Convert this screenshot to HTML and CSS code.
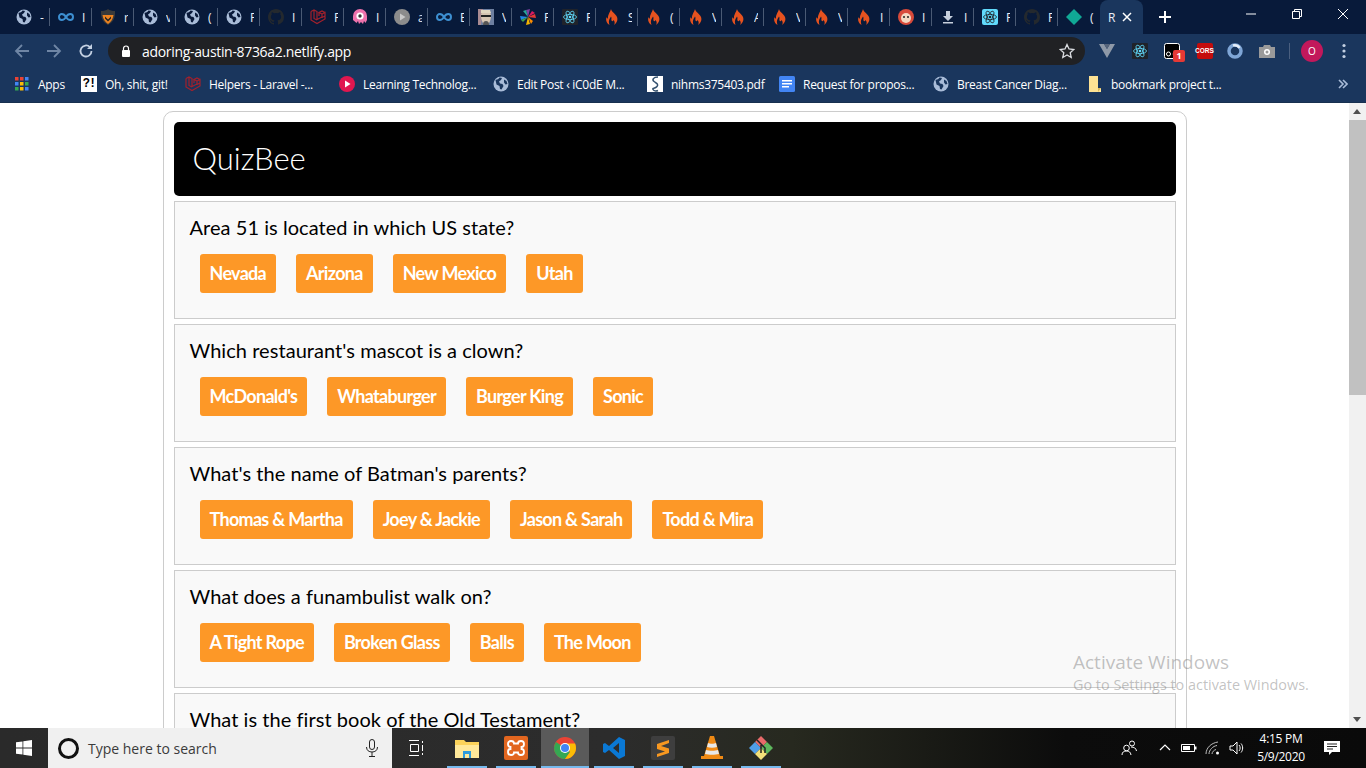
FILE: index.html
```html
<!DOCTYPE html>
<html lang="en">
<head>
<meta charset="utf-8">
<title>QuizBee</title>
<link rel="stylesheet" href="styles.css">
</head>
<body>
<svg class="defs" width="0" height="0">
<defs>
<symbol id="globe" viewBox="0 0 16 16"><circle cx="8" cy="8" r="7.500" fill="#a9bcd8"/><path d="M2.500 4c2-.5 3-1 4-2.500l2.500.5-1 2-2 1.500 1 2 2.500.5 1 2-2 3.500-1.500-.5-.5-3-3-1.500zM11 3.500l2.500 1.500 1 3-2 .5-1.500-2z" fill="#0a1a3a"/></symbol>
<symbol id="globe2" viewBox="0 0 16 16"><circle cx="8" cy="8" r="7.500" fill="#a9bcd8"/><path d="M2.500 4c2-.5 3-1 4-2.500l2.500.5-1 2-2 1.500 1 2 2.500.5 1 2-2 3.500-1.500-.5-.5-3-3-1.500zM11 3.500l2.500 1.500 1 3-2 .5-1.500-2z" fill="#1a365d"/></symbol>
<symbol id="inf" viewBox="0 0 16 16"><path d="M8 8C6.500 5.500 5 5 3.800 5 2.200 5 1 6.300 1 8s1.200 3 2.800 3C5 11 6.500 10.500 8 8c1.500-2.500 3-3 4.200-3C13.800 5 15 6.300 15 8s-1.200 3-2.800 3C11 11 9.500 10.500 8 8z" fill="none" stroke="#3d8fd1" stroke-width="2"/></symbol>
<symbol id="shield" viewBox="0 0 16 16"><path d="M1 2c3 0 5-.5 7-2 2 1.500 4 2 7 2 .5 6.500-1.500 11-7 14C2.500 13 .5 8.500 1 2z" fill="#3a3a3a"/><path d="M2.500 6h11c-.5 4-2.500 7-5.500 9C5 13 3 10 2.500 6z" fill="#ee8320"/><path d="M5 7.500l3 3 3-3v2l-3 3-3-3z" fill="#222"/></symbol>
<symbol id="gh" viewBox="0 0 16 16"><path fill="#24292e" d="M8 0C3.580 0 0 3.580 0 8c0 3.540 2.290 6.530 5.470 7.590.4.070.55-.17.55-.38v-1.340c-2.230.48-2.690-1.070-2.690-1.070-.36-.93-.89-1.170-.89-1.170-.73-.5.060-.49.060-.49.800.060 1.220.82 1.220.82.720 1.220 1.870.87 2.330.66.070-.52.280-.87.510-1.070-1.780-.2-3.640-.89-3.640-3.950 0-.87.31-1.590.82-2.150-.08-.2-.36-1.020.080-2.120 0 0 .67-.21 2.200.82a7.600 7.600 0 0 1 4 0c1.530-1.040 2.200-.82 2.200-.82.44 1.100.16 1.920.08 2.120.51.560.82 1.270.82 2.150 0 3.070-1.870 3.750-3.650 3.950.29.250.54.730.54 1.480v2.200c0 .21.150.46.550.38A8 8 0 0 0 16 8c0-4.420-3.580-8-8-8z"/></symbol>
<symbol id="lara" viewBox="0 0 16 16"><path d="M1 2.500l3-1.500 3 1.500v8l5-2.500V5l3-1.500V7l-3 1.500M1 2.500V11l6 3.500L15 10V7M4 1v8.500l3 1.500M12 5l-3-1.500L12 2l3 1.500M9 3.500V7" fill="none" stroke="#a3212c" stroke-width="1.200"/></symbol>
<symbol id="octo" viewBox="0 0 16 16"><path d="M1 7a7 7 0 0 1 14 0v4l-1.500 3-1.500-2-1 3-2-2-2 2-1-3-1.500 2L1 11z" fill="#ee72ac"/><circle cx="8" cy="7" r="3.600" fill="#fff"/><circle cx="8" cy="7" r="1.700" fill="#333"/></symbol>
<symbol id="playg" viewBox="0 0 16 16"><circle cx="8" cy="8" r="8" fill="#8c8c8c"/><path d="M6 4.500L11.500 8 6 11.500z" fill="#c9c9c9"/></symbol>
<symbol id="photo" viewBox="0 0 16 16"><rect width="16" height="16" fill="#6d7fa0"/><path d="M0 0h5l-2 16H0z" fill="#a98b92"/><path d="M3 7c0-4 2-6 5-6s5 2 5 6-2 9-5 9-5-5-5-9z" fill="#d6c5b2"/><path d="M3 1h9l1 3H3z" fill="#e0d6c0"/><path d="M3 6h10v2H3z" fill="#222"/><path d="M5 16c0-3 1-4 3-4s3 1 3 4z" fill="#555"/></symbol>
<symbol id="pin" viewBox="0 0 16 16"><path d="M8 8L6 1l4-1z" fill="#7b3fa0"/><path d="M8 8l7-3 1 4z" fill="#e53935"/><path d="M8 8l2 7-4 1z" fill="#f4b400"/><path d="M8 8L1 11 0 7z" fill="#1e88e5"/><path d="M8 8l4-6 3 2z" fill="#d81b60"/><path d="M8 8l-5 5-2-2z" fill="#43a047"/><path d="M8 8l5 4-2 3z" fill="#fb8c00"/><path d="M8 8L3 2l3-1z" fill="#26a69a"/></symbol>
<symbol id="react" viewBox="0 0 16 16"><rect width="16" height="16" rx="1" fill="#20232a"/><g fill="none" stroke="#61dafb" stroke-width=".8"><ellipse cx="8" cy="8" rx="6.500" ry="2.600"/><ellipse cx="8" cy="8" rx="6.500" ry="2.600" transform="rotate(60 8 8)"/><ellipse cx="8" cy="8" rx="6.500" ry="2.600" transform="rotate(120 8 8)"/></g><circle cx="8" cy="8" r="1.300" fill="#61dafb"/></symbol>
<symbol id="reactl" viewBox="0 0 16 16"><rect width="16" height="16" rx="2" fill="#61dafb"/><g fill="none" stroke="#20232a" stroke-width=".8"><ellipse cx="8" cy="8" rx="6.500" ry="2.600"/><ellipse cx="8" cy="8" rx="6.500" ry="2.600" transform="rotate(60 8 8)"/><ellipse cx="8" cy="8" rx="6.500" ry="2.600" transform="rotate(120 8 8)"/></g><circle cx="8" cy="8" r="1.300" fill="#20232a"/></symbol>
<symbol id="fire" viewBox="0 0 16 16"><path d="M7 0c.5 3 4.500 4.500 6 8 1.200 3-.5 6.500-3 8 1-1.500 1-3.500-.5-5-.5 1.500-1.500 1.500-2 .5-.5-1 .5-2.500-.5-4C6 9.500 4 11 5.500 16 2.500 14.500 1.500 11 2.500 8c.3 1 1 1.500 1.500 1.500C3.500 6 6 3.500 7 0z" fill="#e6521f"/></symbol>
<symbol id="face" viewBox="0 0 16 16"><circle cx="8" cy="8" r="8" fill="#d84a3a"/><circle cx="8" cy="9" r="5" fill="#f4d7c0"/><circle cx="6" cy="8" r="1" fill="#222"/><circle cx="10" cy="8" r="1" fill="#222"/></symbol>
<symbol id="dl" viewBox="0 0 16 16"><path d="M6 2h4v5h3l-5 5-5-5h3zM3 13h10v1.500H3z" fill="#c7d0dd"/></symbol>
<symbol id="dia" viewBox="0 0 16 16"><path d="M8 0l8 8-8 8-8-8z" fill="#10a895"/></symbol>
</defs>
</svg>

<div class="chrome">
  <div class="tabstrip">
    <div class="tab"><svg class="ic"><use href="#globe"/></svg><span class="t">-</span></div>
    <div class="tab"><svg class="ic"><use href="#inf"/></svg><span class="t">I</span></div>
    <div class="tab"><svg class="ic"><use href="#shield"/></svg><span class="t">r</span></div>
    <div class="tab"><svg class="ic"><use href="#globe"/></svg><span class="t">v</span></div>
    <div class="tab"><svg class="ic"><use href="#globe"/></svg><span class="t">(</span></div>
    <div class="tab"><svg class="ic"><use href="#globe"/></svg><span class="t">F</span></div>
    <div class="tab"><svg class="ic"><use href="#gh"/></svg><span class="t">I</span></div>
    <div class="tab"><svg class="ic"><use href="#lara"/></svg><span class="t">F</span></div>
    <div class="tab"><svg class="ic"><use href="#octo"/></svg><span class="t">I</span></div>
    <div class="tab"><svg class="ic"><use href="#playg"/></svg><span class="t">a</span></div>
    <div class="tab"><svg class="ic"><use href="#inf"/></svg><span class="t">E</span></div>
    <div class="tab"><svg class="ic"><use href="#photo"/></svg><span class="t">V</span></div>
    <div class="tab"><svg class="ic"><use href="#pin"/></svg><span class="t">F</span></div>
    <div class="tab"><svg class="ic"><use href="#react"/></svg><span class="t">F</span></div>
    <div class="tab"><svg class="ic"><use href="#fire"/></svg><span class="t">S</span></div>
    <div class="tab"><svg class="ic"><use href="#fire"/></svg><span class="t">(</span></div>
    <div class="tab"><svg class="ic"><use href="#fire"/></svg><span class="t">V</span></div>
    <div class="tab"><svg class="ic"><use href="#fire"/></svg><span class="t">A</span></div>
    <div class="tab"><svg class="ic"><use href="#fire"/></svg><span class="t">V</span></div>
    <div class="tab"><svg class="ic"><use href="#fire"/></svg><span class="t">V</span></div>
    <div class="tab"><svg class="ic"><use href="#fire"/></svg><span class="t">I</span></div>
    <div class="tab"><svg class="ic"><use href="#face"/></svg><span class="t">I</span></div>
    <div class="tab"><svg class="ic"><use href="#dl"/></svg><span class="t">I</span></div>
    <div class="tab"><svg class="ic"><use href="#reactl"/></svg><span class="t">F</span></div>
    <div class="tab"><svg class="ic"><use href="#gh"/></svg><span class="t">F</span></div>
    <div class="tab tab-last"><svg class="ic"><use href="#dia"/></svg><span class="t">(</span></div>
    <div class="tab-active"><span class="t">R</span><svg class="close" viewBox="0 0 10 10"><path d="M1 1l8 8M9 1l-8 8" stroke="#fff" stroke-width="1.500"/></svg></div>
    <svg class="newtab" viewBox="0 0 12 12"><path d="M6 0v12M0 6h12" stroke="#fff" stroke-width="2"/></svg>
    <div class="winctl">
      <svg class="wc" viewBox="0 0 46 14"><path d="M18 7h10" stroke="#fff"/></svg>
      <svg class="wc" viewBox="0 0 46 14"><path d="M18.500 4.500h7v7h-7zM20.500 4.500v-2h7v7h-2" fill="none" stroke="#fff"/></svg>
      <svg class="wc" viewBox="0 0 46 14"><path d="M18 2l10 10M28 2L18 12" stroke="#fff"/></svg>
    </div>
  </div>

  <div class="toolbar">
    <svg class="nav" viewBox="0 0 16 16"><path d="M15 8H2M8 2L2 8l6 6" fill="none" stroke="#6f86a5" stroke-width="1.800"/></svg>
    <svg class="nav" viewBox="0 0 16 16"><path d="M1 8h13M8 2l6 6-6 6" fill="none" stroke="#6f86a5" stroke-width="1.800"/></svg>
    <svg class="nav" viewBox="0 0 16 16"><path d="M13.500 8a5.500 5.500 0 1 1-1.600-3.900" fill="none" stroke="#c3d0e2" stroke-width="1.800"/><path d="M14 1v5H9z" fill="#c3d0e2"/></svg>
    <div class="omni">
      <svg class="lock" viewBox="0 0 10 12"><path d="M2.500 5V3.500a2.500 2.500 0 0 1 5 0V5" fill="none" stroke="#fff" stroke-width="1.200"/><rect y="5" width="8" height="7" rx="1" x="1" fill="#fff"/></svg>
      <span class="url">adoring-austin-8736a2.netlify.app</span>
      <svg class="star" viewBox="0 0 16 16"><path d="M8 1.500l2 4.500 4.800.5-3.600 3.200 1 4.800L8 12l-4.200 2.500 1-4.800L1.200 6.500 6 6z" fill="none" stroke="#dadce0" stroke-width="1.300"/></svg>
    </div>
    <div class="exts">
      <svg class="ext" viewBox="0 0 16 16"><path d="M0 1h5l3 5 3-5h5L8 15z" fill="#8e99a8"/><path d="M5 1h6L8 6z" fill="#56657c"/></svg>
      <svg class="ext" viewBox="0 0 16 16"><use href="#react"/></svg>
      <div class="ext-badge"><svg class="ext" viewBox="0 0 16 16"><rect x=".5" y=".5" width="15" height="15" rx="2" fill="#000" stroke="#fff"/><circle cx="4.500" cy="11" r="2" fill="none" stroke="#fff"/><circle cx="10" cy="11" r="1.500" fill="#777"/></svg><span class="badge">1</span></div>
      <div class="ext cors"><span>CORS</span></div>
      <svg class="ext ext-ring" viewBox="0 0 16 16"><circle cx="8" cy="8" r="6" fill="none" stroke="#7fa6d6" stroke-width="3.500"/><path d="M6 2.400a6 6 0 0 1 6.500 2.500" fill="none" stroke="#e6eef8" stroke-width="2.500"/></svg>
      <svg class="ext" viewBox="0 0 16 16"><path d="M0 4h4l1-2h6l1 2h4v11H0z" fill="#9a9a9a"/><circle cx="8" cy="9" r="3" fill="#fff"/><circle cx="8" cy="9" r="1.500" fill="#9a9a9a"/></svg>
      <span class="tdiv"></span>
      <span class="avatar">O</span>
      <svg class="dots" viewBox="0 0 4 16"><circle cx="2" cy="2.500" r="1.600" fill="#c3d0e2"/><circle cx="2" cy="8" r="1.600" fill="#c3d0e2"/><circle cx="2" cy="13.500" r="1.600" fill="#c3d0e2"/></svg>
    </div>
  </div>

  <div class="bookmarks">
    <div class="bm bm-apps"><svg class="ic" viewBox="0 0 14 14"><rect width="3.500" height="3.500" class="apps-r"/><rect x="5" width="3.500" height="3.500" class="apps-r"/><rect x="10" width="3.500" height="3.500" class="apps-b"/><rect y="5" width="3.500" height="3.500" class="apps-b"/><rect x="5" y="5" width="3.500" height="3.500" class="apps-y"/><rect x="10" y="5" width="3.500" height="3.500" class="apps-g"/><rect y="10" width="3.500" height="3.500" class="apps-g"/><rect x="5" y="10" width="3.500" height="3.500" class="apps-y"/><rect x="10" y="10" width="3.500" height="3.500" class="apps-b"/></svg><span>Apps</span></div>
    <div class="bm bm-git"><span class="qicon">?!</span><span>Oh, shit, git!</span></div>
    <div class="bm bm-w"><svg class="ic"><use href="#lara"/></svg><span>Helpers - Laravel -...</span></div>
    <div class="bm bm-w"><svg class="ic" viewBox="0 0 16 16"><circle cx="8" cy="8" r="8" fill="#e0174f"/><path d="M6 4.500L11.500 8 6 11.500z" fill="#fff"/></svg><span>Learning Technolog...</span></div>
    <div class="bm bm-w"><svg class="ic"><use href="#globe2"/></svg><span>Edit Post ‹ iC0dE M...</span></div>
    <div class="bm bm-pdf"><svg class="ic" viewBox="0 0 16 16"><rect width="16" height="16" fill="#fff"/><path d="M11 1C6 1 5 4 7 5.500s5 2.500 3 5-5 1-4 3 4 1.500 5 1" fill="none" stroke="#33506e" stroke-width="1.500"/></svg><span>nihms375403.pdf</span></div>
    <div class="bm bm-w"><svg class="ic" viewBox="0 0 16 16"><rect width="16" height="16" rx="1.500" fill="#4285f4"/><path d="M3 4h10v1.500H3zM3 7h10v1.500H3zM3 10h7v1.500H3z" fill="#fff"/></svg><span>Request for propos...</span></div>
    <div class="bm bm-w"><svg class="ic"><use href="#globe2"/></svg><span>Breast Cancer Diag...</span></div>
    <div class="bm bm-w"><svg class="ic" viewBox="0 0 16 16"><path d="M2 0h9v12h3v4H2z" fill="#fde293"/><path d="M11 12h3l-3 4z" fill="#d8b75c"/></svg><span>bookmark project t...</span></div>
    <svg class="more" viewBox="0 0 10 10"><path d="M1 1l4 4-4 4M5 1l4 4-4 4" fill="none" stroke="#a9bcd8" stroke-width="1.600"/></svg>
  </div>
</div>

<div class="viewport">
  <main class="page">
    <div class="card">
      <header class="brand"><h1>QuizBee</h1></header>
      <section class="q"><h2>Area 51 is located in which US state?</h2>
        <div class="opts"><button>Nevada</button><button>Arizona</button><button>New Mexico</button><button>Utah</button></div></section>
      <section class="q"><h2>Which restaurant's mascot is a clown?</h2>
        <div class="opts"><button>McDonald's</button><button>Whataburger</button><button>Burger King</button><button>Sonic</button></div></section>
      <section class="q"><h2>What's the name of Batman's parents?</h2>
        <div class="opts"><button>Thomas &amp; Martha</button><button>Joey &amp; Jackie</button><button>Jason &amp; Sarah</button><button>Todd &amp; Mira</button></div></section>
      <section class="q"><h2>What does a funambulist walk on?</h2>
        <div class="opts"><button>A Tight Rope</button><button>Broken Glass</button><button>Balls</button><button>The Moon</button></div></section>
      <section class="q"><h2>What is the first book of the Old Testament?</h2></section>
    </div>
  </main>
  <div class="scrollbar">
    <span class="arrow-up"></span>
    <div class="track"><div class="thumb"></div></div>
    <span class="arrow-down"></span>
  </div>
  <div class="watermark"><div class="wm1">Activate Windows</div><div class="wm2">Go to Settings to activate Windows.</div></div>
</div>

<footer class="taskbar">
  <div class="start"><svg class="win" viewBox="0 0 16 16"><path d="M0 2.300l6.500-.9v6.200H0zM7.300 1.300L16 0v7.600H7.300zM0 8.400h6.500v6.200L0 13.700zM7.300 8.400H16V16l-8.700-1.300z" fill="#fff"/></svg></div>
  <div class="search">
    <span class="cortana"></span>
    <span class="stext">Type here to search</span>
    <svg class="mic" viewBox="0 0 12 18"><rect x="3.500" y=".5" width="5" height="10" rx="2.500" fill="none" stroke="#222"/><path d="M.5 8c0 3.500 2.500 5 5.500 5s5.500-1.500 5.500-5M6 13v4M3 17.500h6" fill="none" stroke="#222"/></svg>
  </div>
  <div class="tb-tv"><svg class="tv" viewBox="0 0 16 16"><path d="M1 .5h10M1 15.500h10M2.500 4.500h8v7h-8z" fill="none" stroke="#fff"/><path d="M14 1h1v2h-1zM14 5h1v6h-1zM14 13h1v2h-1z" fill="#fff"/></svg></div>
  <div class="tb-btn"><svg class="app" viewBox="0 0 24 24"><path d="M0 4h9l2 2h13v16H0z" fill="#fbd25a"/><path d="M0 9h24v13H0z" fill="#ffe89a"/><path d="M8 15h8v7h-2v-4h-4v4H8z" fill="#2f9bdc"/></svg></div>
  <div class="tb-btn"><svg class="app" viewBox="0 0 24 24"><rect width="24" height="24" rx="2" fill="#e2661f"/><path d="M7 5c2 0 3 1 3 2.500h4C14 6 15 5 17 5s3 1.500 3 3-1 3-2.500 3v2c1.500 0 2.500 1.500 2.500 3s-1 3-3 3-3-1-3-2.500h-4C10 18 9 19 7 19s-3-1.500-3-3 1-3 2.500-3v-2C5 11 4 9.500 4 8s1-3 3-3z" fill="none" stroke="#fff" stroke-width="1.800"/></svg></div>
  <div class="tb-btn active"><svg class="app" viewBox="0 0 24 24"><circle cx="12" cy="12" r="11" fill="#ea4335"/><path d="M12 12L2.500 17.500A11 11 0 0 1 3 6z" fill="#34a853"/><path d="M12 23A11 11 0 0 1 2.500 17.500L8 12l4 0 5 4z" fill="#34a853"/><path d="M12 23a11 11 0 0 0 11-11c0-1.500-.3-3-.9-4.500H12l5 8.500z" fill="#fbbc05"/><circle cx="12" cy="12" r="5" fill="#fff"/><circle cx="12" cy="12" r="4" fill="#4285f4"/></svg></div>
  <div class="tb-btn"><svg class="app" viewBox="0 0 24 24"><path d="M17 1l6 3v16l-6 3L7 14l-4 3-2-1V8l2-1 4 3zm0 6l-6 5 6 5z" fill="#0a78d4"/></svg></div>
  <div class="tb-btn"><svg class="app" viewBox="0 0 24 24"><rect width="24" height="24" rx="2" fill="#3e3e3e"/><path d="M18 4L6 8v5l8 2.500L6 18v3l12-4v-4.500L10 10l8-3z" fill="#f89820"/></svg></div>
  <div class="tb-btn"><svg class="app" viewBox="0 0 24 24"><path d="M10 0h4l6 20H4z" fill="#f08a14"/><path d="M8 7c2 1 6 1 8 0l1 4c-3 1-7 1-10 0zM6 14c3 1 9 1 12 0l1 4c-4 1-10 1-14 0z" fill="#e8e8e8"/><path d="M1 20h22v3H1z" fill="#f08a14"/></svg></div>
  <div class="tb-btn"><svg class="app" viewBox="0 0 24 24"><path d="M6 6l6-6 6 6-6 6z" fill="#e86a6a"/><path d="M0 12l6-6 6 6-6 6z" fill="#4f9ee8"/><path d="M12 12l6-6 6 6-6 6z" fill="#5db75d"/><path d="M6 18l6-6 6 6-6 6z" fill="#f2e07a"/><path d="M8 4l8 8v5M12 9v8" fill="none" stroke="#222" stroke-width="1.500"/></svg></div>
  <div class="tray">
    <svg class="tr tr-people" viewBox="0 0 16 16"><circle cx="5.500" cy="8" r="2.800" fill="none" stroke="#fff"/><circle cx="11" cy="3.500" r="2.500" fill="none" stroke="#fff"/><path d="M1 15c0-3 2-4 4.500-4s4 1 4.500 4M10 7c3 0 5 1 5.500 4" fill="none" stroke="#fff"/></svg>
    <svg class="tr" viewBox="0 0 16 16"><path d="M3 10l5-5 5 5" fill="none" stroke="#fff" stroke-width="1.200"/></svg>
    <svg class="tr" viewBox="0 0 16 16"><path d="M.5 4.500h13v7H.5z" fill="none" stroke="#fff"/><path d="M2 6h7v4H2zM14 6.500h1.500v3H14z" fill="#fff"/></svg>
    <svg class="tr" viewBox="0 0 16 16"><path d="M1 14C1 8 6 3 13 2M4 14c0-4 4-8 8-8.500M7 14c0-2 2-4 4-4.500" fill="none" stroke="#bdbdbd"/><circle cx="12.500" cy="13" r="1.500" fill="#fff"/></svg>
    <svg class="tr" viewBox="0 0 16 16"><path d="M1 6h3l4-4v12l-4-4H1z" fill="none" stroke="#fff"/><path d="M10 5c1.500 1.500 1.500 4.500 0 6M12 3.500c2.200 2.500 2.200 6.500 0 9" fill="none" stroke="#fff"/></svg>
  </div>
  <div class="clock"><span>4:15 PM</span><span>5/9/2020</span></div>
  <svg class="note" viewBox="0 0 16 16"><path d="M0 1h16v11H8l-3 3v-3H0z" fill="#fff"/><path d="M3 4h10M3 6.500h10M3 9h6" stroke="#222"/></svg>
</footer>
</body>
</html>
```
FILE: styles.css
```css
* { box-sizing: border-box; }
html, body { margin: 0; height: 100%; overflow: hidden; }
body { width: 1366px; height: 768px; display: flex; flex-direction: column; font-family: "Open Sans", sans-serif; background: #fff; }
.defs { position: absolute; }
.ic { width: 16px; height: 16px; flex: none; display: block; }

.chrome { flex: none; height: 103px; background: #1a365d; border-bottom: 1px solid #17304f; }
.tabstrip { height: 34px; background: #081a3a; display: flex; align-items: center; padding-left: 8px; }
.tab { width: 42px; height: 18px; flex: none; display: flex; align-items: center; padding-left: 8px; border-right: 1px solid #4a5a74; overflow: hidden; }
.tab-last { border-right: 0; }
.t { color: #e8eef8; font-size: 12px; margin-left: 8px; width: 4px; overflow: hidden; flex: none; }
.tab-active { width: 43px; height: 34px; flex: none; background: #1a365d; border-radius: 8px 8px 0 0; display: flex; align-items: center; padding-left: 8px; }
.tab-active .t { margin-left: 0; width: 9px; }
.close { width: 10px; height: 10px; margin-left: 5px; flex: none; }
.newtab { width: 12px; height: 12px; margin-left: 16px; flex: none; }
.winctl { margin-left: auto; display: flex; align-self: flex-start; padding-top: 7px; }
.wc { width: 46px; height: 14px; display: block; }

.toolbar { height: 34px; display: flex; align-items: center; padding-left: 14px; }
.nav { width: 16px; height: 16px; margin-right: 16px; flex: none; }
.nav + .omni { margin-left: -2px; }
.omni { width: 977px; height: 28px; border-radius: 14px; background: #202124; display: flex; align-items: center; padding: 0 10px 0 14px; flex: none; }
.lock { width: 10px; height: 12px; flex: none; margin-left: -1px; }
.url { color: #fff; font-size: 14px; margin-left: 11px; letter-spacing: -.32px; }
.star { width: 16px; height: 16px; margin-left: auto; }
.exts { display: flex; align-items: center; flex: 1; padding-left: 14px; position: relative; height: 34px; }
.ext { width: 16px; height: 16px; margin-right: 16.500px; flex: none; display: block; }
.ext-ring { margin-right: 15.500px; }
.ext-badge { position: relative; }
.badge { position: absolute; left: 9px; top: 7px; width: 12px; height: 12px; background: #e53935; color: #fff; font: 700 9px/12px "Open Sans", sans-serif; text-align: center; border-radius: 2px; }
.ext.cors { background: #c40c0c; border-radius: 2px; display: flex; align-items: center; justify-content: center; margin-right: 14.500px; }
.cors span { color: #fff; font: 700 6.500px/1 "Liberation Sans Narrow", "Liberation Sans", sans-serif; }
.tdiv { width: 1px; height: 16px; background: #4a5f7f; margin-left: -2px; margin-right: 11px; flex: none; }
.avatar { width: 22px; height: 22px; border-radius: 50%; background: #c2185b; color: #fff; font-size: 10px; line-height: 22px; text-align: center; flex: none; }
.dots { width: 4px; height: 16px; margin-left: 19px; flex: none; }

.bookmarks { height: 32px; display: flex; align-items: center; padding-left: 15px; position: relative; }
.bm { display: flex; align-items: center; gap: 8px; color: #fff; font-size: 12px; white-space: nowrap; flex: none; overflow: hidden; letter-spacing: -.28px; }
.bm-apps { width: 66px; gap: 9px; }
.bm-apps .ic { width: 14px; height: 14px; }
.apps-r { fill: #ea4335; } .apps-b { fill: #4285f4; } .apps-y { fill: #fbbc05; } .apps-g { fill: #34a853; }
.bm-git { width: 104px; }
.bm-w { width: 154px; }
.bm-pdf { width: 132px; }
.qicon { width: 16px; height: 16px; background: #fff; color: #000; font: 700 12px/16px "Liberation Mono", monospace; text-align: center; letter-spacing: -1px; flex: none; }
.more { width: 10px; height: 10px; margin-left: auto; margin-right: 18px; flex: none; }

.viewport { flex: 1; min-height: 0; display: flex; position: relative; overflow: hidden; }
.page { flex: 1; min-width: 0; padding-top: 8px; overflow: hidden; }
.card { width: 1024px; margin: 0 auto; border: 1px solid #ccc; border-radius: 10px; padding: 10px; display: flex; flex-direction: column; gap: 5px; font-family: Lato, sans-serif; color: #000; background: #fff; }
.brand { background: #000; border-radius: 5px; height: 74px; display: flex; align-items: center; padding: 0 0 2px 19px; }
.brand h1 { margin: 0; color: #fff; font-size: 31px; font-weight: 300; line-height: 1; }
.q { flex: none; height: 118px; border: 1px solid #ccc; background: #f9f9f9; padding: 13px 15px; }
.q h2 { margin: 0; font-size: 20px; font-weight: 400; line-height: 24px; letter-spacing: .05px; }
.opts { display: flex; gap: 20px; padding-left: 10px; margin-top: 15px; }
button { height: 39px; padding: 0 10px 2px; border: 0; border-radius: 3px; background: #fd9827; color: #fff; font: 700 18px Lato, sans-serif; letter-spacing: -.7px; white-space: nowrap; }

.scrollbar { width: 17px; flex: none; background: #f1f1f1; display: flex; flex-direction: column; align-items: center; }
.track { flex: 1; width: 100%; }
.thumb { width: 100%; height: 275px; background: #c1c1c1; }
.arrow-up, .arrow-down { height: 17px; width: 100%; flex: none; position: relative; }
.arrow-up::after, .arrow-down::after { content: ""; position: absolute; left: 4px; top: 6px; border-left: 4.500px solid transparent; border-right: 4.500px solid transparent; }
.arrow-up::after { border-bottom: 5px solid #505050; }
.arrow-down::after { border-top: 5px solid #505050; }
.watermark { position: absolute; left: 1073px; top: 546px; color: rgba(120,120,120,.45); pointer-events: none; white-space: nowrap; font-family: "Open Sans", sans-serif; }
.wm1 { font-size: 19px; line-height: 26px; }
.wm2 { font-size: 14.400px; line-height: 20px; }

.taskbar { flex: none; height: 40px; display: flex; align-items: center; gap: 1px; background: linear-gradient(90deg, #2a2a2a 0%, #2c2c2c 45%, #27291f 58%, #0c0c0c 78%, #0a0a0a 100%); color: #fff; }
.start { width: 48px; height: 40px; display: flex; align-items: center; justify-content: center; flex: none; margin-right: -1px; }
.win { width: 16px; height: 16px; }
.search { width: 344px; height: 40px; background: #f0f0f0; display: flex; align-items: center; padding-left: 10px; flex: none; margin-right: -1px; }
.cortana { width: 21px; height: 21px; border-radius: 50%; border: 3px solid #111; flex: none; }
.stext { color: #3b3b3b; font-size: 14px; margin-left: 9px; }
.mic { width: 12px; height: 18px; margin-left: auto; margin-right: 14px; }
.tb-tv { width: 50px; height: 40px; flex: none; display: flex; align-items: center; padding-left: 16px; }
.tb-btn { width: 48px; height: 40px; flex: none; display: flex; align-items: center; justify-content: center; position: relative; }
.tb-btn::after { content: ""; position: absolute; left: 4px; right: 4px; bottom: 0; height: 2px; background: #76b9ed; }
.tb-btn.active { background: #5a5a5a; }
.tb-btn.active::after { left: 0; right: 0; }
.tv { width: 16px; height: 16px; }
.app { width: 24px; height: 24px; margin-left: -1px; }
.tray { margin-left: auto; display: flex; align-items: center; gap: 8px; }
.tr { width: 16px; height: 16px; display: block; }
.tr-people { margin-right: 12px; }
.clock { display: flex; flex-direction: column; align-items: center; width: 62px; font-size: 12px; line-height: 18px; margin-left: 4px; letter-spacing: -.3px; }
.note { width: 16px; height: 16px; margin-left: 11px; margin-right: 26px; }
```
